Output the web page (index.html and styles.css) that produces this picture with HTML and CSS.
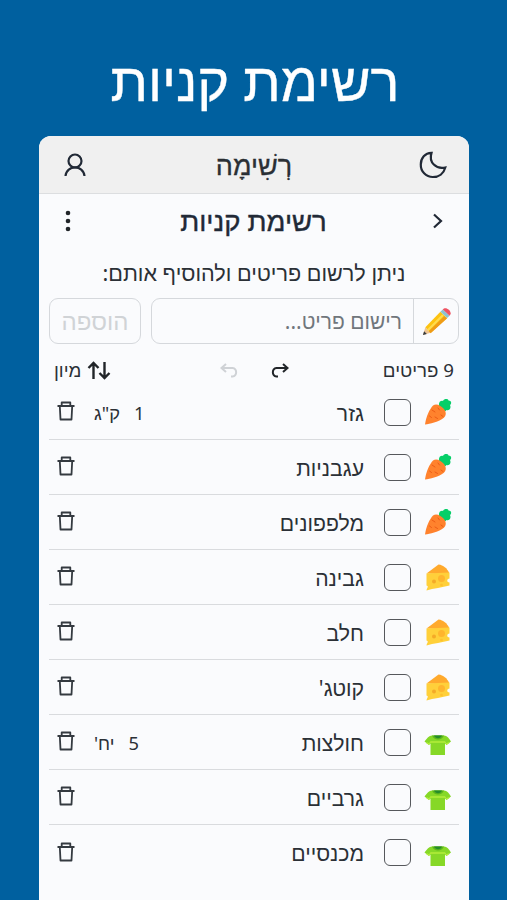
FILE: index.html
```
<!DOCTYPE html>
<html lang="he" dir="rtl">
<head>
  <meta charset="UTF-8">
  <meta name="viewport" content="width=device-width, initial-scale=1.0">
  <title>רשימת קניות</title>
  <link rel="stylesheet" href="styles.css">
</head>
<body>
  <!-- Shared icons -->
  <svg class="sprite" width="0" height="0">
    <symbol id="carrot" viewBox="0 0 28 28">
      <path d="M15.500 9.500C14 5 16 2 19 3c1-2.500 5-2.500 5.500-.5 3 0 3.500 3 1.500 4.500 1.500 3-.5 6-3.500 5-1 2-4 1.500-5-.5z" fill="#06cf68"/>
      <path d="M1 26.500C2 19 5.500 11 9 7.500c3-2.500 7.500-.5 10.500 3s3 7 0 9.500C14 24 6 26 1 26.500z" fill="#ff822d"/>
      <path d="M8 12l3 2M14 10l1.500 2M17 17l2 1.500M11 19l2.500 1.500M5.500 18l2 1.500" stroke="#ed5c16" stroke-width="1" stroke-linecap="round" fill="none"/>
    </symbol>
    <symbol id="cheese" viewBox="0 0 28 28">
      <path d="M2.500 10.500L14.500 1.500c5 .5 8.500 4 10.500 8l-.5 2z" fill="#ffaa2d"/>
      <path d="M2.500 10.500l23-1v6c-3 0-3 4 0 4v3L14 25l-6 1-5.500 1.500c0-2 2-3.500 1-4.500-1-.5-1 0-1-1z" fill="#ffd03a"/>
      <ellipse cx="17.500" cy="15.500" rx="3.500" ry="3.500" fill="#ffb52d"/>
      <circle cx="10" cy="18.500" r="2" fill="#f4aa27"/>
      <circle cx="17.500" cy="22" r="1.300" fill="#ffc02d"/>
    </symbol>
    <symbol id="shirt" viewBox="0 0 28 28">
      <path d="M8 7.500h12c3 .3 5 2.500 7 6l-4.500 3.500-1.500-1.500V27H6.500V15.500L5 17 .5 13.500C3 10 5 7.800 8 7.500z" fill="#86d827"/>
      <path d="M2 15l3 2 1.500-2.200h14.500L22.500 17l3-2-1-.8-2 1-1.500-2H6.500l-1.500 2-2-1z" fill="#b4ed3b"/>
      <path d="M8 7.500c2 5.300 10 5.300 12 0z" fill="#5bb51c"/>
      <path d="M10 7.500c1.500 3.500 6.500 3.500 8 0z" fill="#258b2b"/>
    </symbol>
    <symbol id="trash" viewBox="0 0 18 20">
      <path d="M.5 5h17M4.700 4.500V1.500h8.600v3M2.800 5l.7 13.500h11L15.200 5" fill="none" stroke="#343a40" stroke-width="1.800" stroke-linejoin="round"/>
    </symbol>
  </svg>

  <h1 class="page-title">רשימת קניות</h1>

  <main class="phone">
    <header class="topbar">
      <svg class="icon-moon" viewBox="0 0 28 28">
        <path d="M12.500 1.800C6 2 1.800 7 1.800 13.500a12 12 0 0 0 12 12.500c6 0 11-3.500 12.500-9.500C17 18.500 9.500 11.500 12.500 1.800z"/>
      </svg>
      <span class="brand">רְשִׁימָה</span>
      <svg class="icon-user" viewBox="0 0 22 24">
        <circle cx="11" cy="8" r="6.500"/>
        <path d="M1.500 23c1-11.500 18-11.500 19 0"/>
      </svg>
    </header>

    <section class="list">
      <div class="list-head">
        <svg class="icon-back" viewBox="0 0 10 16"><path d="M1 1.500L8 8l-7 6.500"/></svg>
        <h2>רשימת קניות</h2>
        <svg class="icon-dots" viewBox="0 0 6 22">
          <circle cx="3" cy="3" r="2.300"/><circle cx="3" cy="11" r="2.300"/><circle cx="3" cy="19" r="2.300"/>
        </svg>
      </div>

      <p class="hint">ניתן לרשום פריטים ולהוסיף אותם:</p>

      <div class="add-row">
        <div class="add-field">
          <span class="field-icon">
            <svg viewBox="0 0 32 32">
              <path d="M2 30l2.500-8 5.500 5.500z" fill="#edc391"/>
              <path d="M2 30l1.200-4 2.800 2.800z" fill="#343a40"/>
              <path d="M4.500 22L20 6l7 6.500-17 15z" fill="#fdc310"/>
              <path d="M6 24.500L22 8.500l1.500 1.500L7.500 26z" fill="#ffdb50"/>
              <path d="M8 26l16-15.500 3 2.200L10 28z" fill="#ef9c17"/>
              <path d="M20 6l2.500-2.500 7 6.500-2.500 2.500z" fill="#8dc3d0"/>
              <path d="M22.500 3.500c3-4 11 2.500 7 6.500z" fill="#ef5362"/>
            </svg>
          </span>
          <span class="placeholder">רישום פריט...</span>
        </div>
        <button class="add-btn" disabled>הוספה</button>
      </div>

      <div class="toolbar">
        <span class="count">9 פריטים</span>
        <span class="history">
          <svg class="redo" viewBox="0 0 18 15"><path d="M12 1l4.500 4L12 9M16.500 5H5.500a4.300 4.300 0 0 0 0 8.500H7"/></svg>
          <svg class="undo" viewBox="0 0 18 15"><path d="M6 1L1.500 5 6 9M1.500 5h11a4.300 4.300 0 0 1 0 8.500H11"/></svg>
        </span>
        <span class="sort">
          <svg viewBox="0 0 24 19"><path d="M6.500 18V2M1.500 7l5-5 5 5M17.500 1v16M12.500 12l5 5 5-5"/></svg>
          <span>מיון</span>
        </span>
      </div>

      <ul class="items">
        <li><svg class="cat"><use href="#carrot"/></svg><span class="check"></span><span class="name">גזר</span><span class="qty"><span>1</span><span>ק"ג</span></span><svg class="trash"><use href="#trash"/></svg></li>
        <li><svg class="cat"><use href="#carrot"/></svg><span class="check"></span><span class="name">עגבניות</span><svg class="trash"><use href="#trash"/></svg></li>
        <li><svg class="cat"><use href="#carrot"/></svg><span class="check"></span><span class="name">מלפפונים</span><svg class="trash"><use href="#trash"/></svg></li>
        <li><svg class="cat"><use href="#cheese"/></svg><span class="check"></span><span class="name">גבינה</span><svg class="trash"><use href="#trash"/></svg></li>
        <li><svg class="cat"><use href="#cheese"/></svg><span class="check"></span><span class="name">חלב</span><svg class="trash"><use href="#trash"/></svg></li>
        <li><svg class="cat"><use href="#cheese"/></svg><span class="check"></span><span class="name">קוטג'</span><svg class="trash"><use href="#trash"/></svg></li>
        <li><svg class="cat"><use href="#shirt"/></svg><span class="check"></span><span class="name">חולצות</span><span class="qty"><span>5</span><span>יח'</span></span><svg class="trash"><use href="#trash"/></svg></li>
        <li><svg class="cat"><use href="#shirt"/></svg><span class="check"></span><span class="name">גרביים</span><svg class="trash"><use href="#trash"/></svg></li>
        <li><svg class="cat"><use href="#shirt"/></svg><span class="check"></span><span class="name">מכנסיים</span><svg class="trash"><use href="#trash"/></svg></li>
      </ul>
    </section>
  </main>
</body>
</html>
```
FILE: styles.css
```
* {
  box-sizing: border-box;
}

body {
  margin: 0;
  height: 900px;
  overflow: hidden;
  display: flex;
  flex-direction: column;
  align-items: center;
  background: #00609f;
  color: #2b3036;
  font-family: "Noto Sans", "Liberation Sans", sans-serif;
}

svg {
  display: block;
  flex: none;
}

.sprite {
  position: absolute;
}

h1, h2, p, ul {
  margin: 0;
  padding: 0;
  font-weight: 400;
}

.page-title {
  height: 136px;
  padding-top: 47px;
  padding-left: 3px;
  color: #fff;
  font-size: 54.200px;
  line-height: 66px;
  -webkit-text-stroke: 0.4px #fff;
}

/* App window */
.phone {
  width: 430px;
  flex: 1;
  margin-left: 1px;
  border-radius: 12px 12px 0 0;
  background: #fafbfd;
  overflow: hidden;
}

.topbar {
  height: 58px;
  padding: 0 22px 0 25px;
  display: flex;
  align-items: center;
  justify-content: space-between;
  background: #f0f0f0;
  border-bottom: 1px solid #dcdee0;
}

.topbar svg,
.icon-back {
  fill: none;
  stroke: #212936;
  stroke-width: 2.200;
}

.icon-moon {
  width: 28px;
  height: 28px;
}

.icon-user {
  width: 22px;
  height: 24px;
}

.brand {
  margin-left: 3px;
  font-size: 27px;
  line-height: 56px;
  -webkit-text-stroke: 0.3px #212529;
}

.list {
  padding: 0 10px;
}

.list-head {
  height: 54px;
  padding: 0 16px;
  display: flex;
  align-items: center;
  justify-content: space-between;
}

.list-head h2 {
  margin-left: 3px;
  font-size: 27.500px;
  line-height: 54px;
  color: #212936;
  -webkit-text-stroke: 0.4px #212936;
}

.icon-back {
  width: 10px;
  height: 16px;
}

.icon-dots {
  width: 6px;
  height: 22px;
  fill: #212529;
}

.hint {
  height: 50px;
  line-height: 50px;
  font-size: 21.600px;
  text-align: center;
}

/* New item form */
.add-row {
  height: 46px;
  display: flex;
  gap: 10px;
}

.add-field {
  flex: 1;
  display: flex;
  border: 1px solid #d5d8dc;
  border-radius: 9px;
}

.field-icon {
  width: 45px;
  display: flex;
  align-items: center;
  justify-content: center;
  border-left: 1px solid #d5d8dc;
}

.field-icon svg {
  width: 31px;
  height: 31px;
}

.placeholder {
  padding-right: 11px;
  font-size: 21px;
  line-height: 44px;
  color: #70767c;
}

.add-btn {
  width: 92px;
  padding: 0;
  border: 1px solid #d5d8dc;
  border-radius: 9px;
  background: none;
  color: #d0d3d6;
  font-family: inherit;
  font-size: 24px;
  line-height: 44px;
}

.toolbar {
  height: 41px;
  padding: 11px 5px 0;
  display: grid;
  grid-template-columns: 1fr auto 1fr;
  align-items: center;
  font-size: 18.700px;
  line-height: 28px;
}

.history {
  display: flex;
  gap: 33px;
}

.history svg {
  width: 18px;
  height: 15px;
  fill: none;
  stroke: #212529;
  stroke-width: 2;
}

.history .undo {
  stroke: #cfd2d6;
}

.sort {
  display: flex;
  align-items: center;
  justify-content: flex-end;
  gap: 6px;
}

.sort svg {
  width: 24px;
  height: 19px;
  fill: none;
  stroke: #212529;
  stroke-width: 2.400;
}

/* Items */
.items {
  list-style: none;
}

.items li {
  height: 55px;
  padding: 0 7px 0 8px;
  display: flex;
  align-items: center;
  border-bottom: 1px solid #d9dbde;
}

.items li:last-child {
  border-bottom: 0;
}

.cat {
  width: 28px;
  height: 28px;
}

.check {
  width: 27px;
  height: 27px;
  margin-right: 13px;
  border: 1.500px solid #55585c;
  border-radius: 6px;
}

.name {
  flex: 1;
  margin-right: 20px;
  font-size: 21.200px;
}

.qty {
  display: flex;
  gap: 14px;
  margin-left: 19px;
  font-size: 18.300px;
}

.trash {
  width: 18px;
  height: 20px;
  margin-bottom: 2px;
}
```
